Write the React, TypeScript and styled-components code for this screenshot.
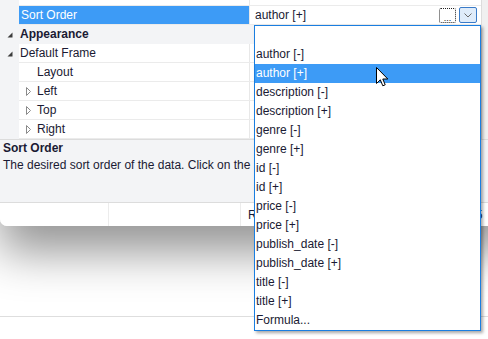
import * as React from 'react'
import styled, { createGlobalStyle } from 'styled-components'

const GlobalStyle = createGlobalStyle`
  html, body {
    margin: 0;
    padding: 0;
    background: #ffffff;
    overflow: hidden;
  }
  body {
    font-family: "Liberation Sans", Arial, sans-serif;
    font-size: 12px;
    color: #1a1a33;
  }
`

const Stage = styled.div`
  position: relative;
  width: 488px;
  height: 339px;
  overflow: hidden;
`

const Window = styled.div`
  width: 520px;
  height: 226px;
  display: flex;
  flex-direction: column;
  background: #f0f0f0;
  border-radius: 0 0 7px 7px;
  box-shadow: 0 26px 46px rgba(0, 0, 0, 0.42);
  overflow: hidden;
`

const GridArea = styled.div`
  display: flex;
`

const Grid = styled.div`
  width: 481px;
  border-right: 1px solid #dcdcdc;
  background: #ffffff;
  display: flex;
  flex-direction: column;
`

const Row = styled.div<{ $h?: number; $category?: boolean }>`
  display: flex;
  height: ${p => p.$h ?? 19}px;
  background: ${p => (p.$category ? '#f3f4f6' : '#ffffff')};
`

const Gutter = styled.div`
  width: 19px;
  flex: none;
  background: #f3f4f6;
  display: flex;
  align-items: center;
  padding-left: 7px;
  box-sizing: border-box;
`

const Cells = styled.div<{ $line?: boolean }>`
  flex: 1;
  display: flex;
  border-bottom: 1px solid ${p => (p.$line === false ? 'transparent' : '#ebebeb')};
`

const Label = styled.div<{ $indent?: number; $selected?: boolean; $bold?: boolean; $wide?: boolean }>`
  width: ${p => (p.$wide ? 'auto' : '231px')};
  flex: ${p => (p.$wide ? 1 : 'none')};
  box-sizing: border-box;
  display: flex;
  align-items: center;
  padding-left: ${p => p.$indent ?? 2}px;
  background: ${p => (p.$selected ? '#3d9bf6' : 'transparent')};
  color: ${p => (p.$selected ? '#ffffff' : '#1a1a33')};
  font-weight: ${p => (p.$bold ? 'bold' : 'normal')};
  border-right: ${p => (p.$wide ? 'none' : '1px solid #e8e8e8')};
  white-space: nowrap;
`

const Value = styled.div`
  flex: 1;
  display: flex;
  align-items: center;
  padding: 0 4px 0 5px;
  gap: 3px;
`

const ValueText = styled.span`
  margin-right: auto;
`

const EllipsisButton = styled.div`
  width: 17px;
  height: 15px;
  box-sizing: border-box;
  border: 1px dotted #222;
  border-radius: 2px;
  background: #ffffff;
  display: flex;
  align-items: flex-end;
  justify-content: center;
  font-size: 9px;
  line-height: 8px;
  color: #111;
`

const DropButton = styled.div`
  width: 18px;
  height: 16px;
  box-sizing: border-box;
  border: 1px solid #3a7bc8;
  border-radius: 2px;
  background: #dfecfa;
  display: flex;
  align-items: center;
  justify-content: center;
`

const Expander = styled.svg`
  display: block;
`

const ExpanderSlot = styled.span`
  width: 11px;
  flex: none;
`

const ScrollStrip = styled.div`
  flex: 1;
  background: #f0f0f0;
`

const Description = styled.div`
  height: 62px;
  border-top: 1px solid #dcdcdc;
  border-bottom: 1px solid #dcdcdc;
  background: #f3f4f6;
  padding-left: 3px;
  line-height: 17px;
  white-space: nowrap;
`

const DescTitle = styled.div`
  font-weight: bold;
`

const StatusBar = styled.div`
  height: 23px;
  display: flex;
  background: #ffffff;
`

const StatusCell = styled.div<{ $w?: number; $pad?: number }>`
  width: ${p => (p.$w ? `${p.$w}px` : 'auto')};
  flex: ${p => (p.$w ? 'none' : 1)};
  box-sizing: border-box;
  border-right: 1px solid #ececec;
  display: flex;
  align-items: center;
  padding-left: ${p => p.$pad ?? 8}px;
  white-space: nowrap;
  overflow: hidden;
`

const Rule = styled.div`
  margin-top: 90px;
  height: 1px;
  background: #dedede;
`

const Popup = styled.div`
  position: absolute;
  left: 254px;
  top: 25px;
  width: 227px;
  box-sizing: border-box;
  border: 1px solid #1a7ee0;
  background: #ffffff;
  box-shadow: 2px 2px 3px rgba(0, 0, 0, 0.35);
  display: flex;
  flex-direction: column;
`

const Option = styled.div<{ $active?: boolean }>`
  height: 19px;
  line-height: 19px;
  padding-left: 1px;
  background: ${p => (p.$active ? '#3d9bf6' : '#ffffff')};
  color: ${p => (p.$active ? '#ffffff' : '#1a1a33')};
  white-space: nowrap;
`

const Cursor = styled.svg`
  position: absolute;
  left: 376px;
  top: 67px;
`

const Filled = () => (
  <Expander width="6" height="6" viewBox="0 0 6 6">
    <polygon points="5.5,0.5 5.5,5.5 0.5,5.5" fill="#3c3c3c" />
  </Expander>
)

const Outline = () => (
  <Expander width="6" height="9" viewBox="0 0 6 9">
    <polygon points="0.5,0.5 4.5,4.5 0.5,8.5" fill="#fff" stroke="#8a8a8a" />
  </Expander>
)

type Prop = { label: string; closed?: boolean }

const frameProps: Prop[] = [
  { label: 'Layout' },
  { label: 'Left', closed: true },
  { label: 'Top', closed: true },
  { label: 'Right', closed: true },
]

const options = [
  '',
  'author [-]',
  'author [+]',
  'description [-]',
  'description [+]',
  'genre [-]',
  'genre [+]',
  'id [-]',
  'id [+]',
  'price [-]',
  'price [+]',
  'publish_date [-]',
  'publish_date [+]',
  'title [-]',
  'title [+]',
  'Formula...',
]

export default function App() {
  return (
    <Stage>
      <GlobalStyle />
      <Window>
        <GridArea>
          <Grid>
            <Row $h={6}>
              <Gutter />
              <Cells>
                <Label />
                <Value />
              </Cells>
            </Row>
            <Row>
              <Gutter />
              <Cells>
                <Label $selected>Sort Order</Label>
                <Value>
                  <ValueText>author [+]</ValueText>
                  <EllipsisButton>...</EllipsisButton>
                  <DropButton>
                    <svg width="8" height="5" viewBox="0 0 8 5">
                      <polyline points="0.5,0.5 4,4 7.5,0.5" fill="none" stroke="#6a6a6a" />
                    </svg>
                  </DropButton>
                </Value>
              </Cells>
            </Row>
            <Row $category>
              <Gutter>
                <Filled />
              </Gutter>
              <Cells $line={false}>
                <Label $bold $wide $indent={1}>Appearance</Label>
              </Cells>
            </Row>
            <Row>
              <Gutter>
                <Filled />
              </Gutter>
              <Cells>
                <Label $indent={1}>Default Frame</Label>
                <Value />
              </Cells>
            </Row>
            {frameProps.map(p => (
              <Row key={p.label}>
                <Gutter />
                <Cells>
                  <Label $indent={7}>
                    <ExpanderSlot>{p.closed && <Outline />}</ExpanderSlot>
                    {p.label}
                  </Label>
                  <Value />
                </Cells>
              </Row>
            ))}
          </Grid>
          <ScrollStrip />
        </GridArea>
        <Description>
          <DescTitle>Sort Order</DescTitle>
          <div>The desired sort order of the data. Click on the</div>
        </Description>
        <StatusBar>
          <StatusCell $w={109} />
          <StatusCell $w={132} />
          <StatusCell $w={227} $pad={7}>R</StatusCell>
          <StatusCell $pad={1}>05</StatusCell>
        </StatusBar>
      </Window>
      <Rule />
      <Popup>
        {options.map((o, i) => (
          <Option key={i} $active={o === 'author [+]'}>
            {o}
          </Option>
        ))}
      </Popup>
      <Cursor width="13" height="20" viewBox="0 0 13 20">
        <path
          d="M0.5 0.5 V16.5 L4.3 12.8 L6.8 18.8 L9.2 17.8 L6.8 12 H11.8 Z"
          fill="#ffffff"
          stroke="#000000"
          strokeWidth="1"
        />
      </Cursor>
    </Stage>
  )
}
